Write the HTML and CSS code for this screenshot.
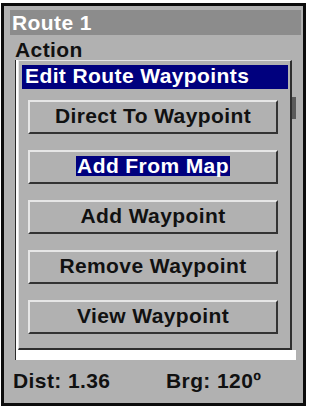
FILE: index.html
```html
<!DOCTYPE html>
<html>
<head>
<meta charset="utf-8">
<link rel="stylesheet" href="styles.css">
</head>
<body>
<div class="screen">
  <div class="titlebar">Route 1</div>
  <div class="label">Action</div>
  <div class="listbox">
    <div class="dialog">
      <div class="dlg-title">Edit Route Waypoints</div>
      <div class="buttons">
        <div class="btn">Direct To Waypoint</div>
        <div class="btn"><span class="sel">Add From Map</span></div>
        <div class="btn">Add Waypoint</div>
        <div class="btn">Remove Waypoint</div>
        <div class="btn">View Waypoint</div>
      </div>
    </div>
    <div class="scroll"><div class="thumb"></div></div>
  </div>
  <div class="footer">
    <span class="dist">Dist: 1.36</span>
    <span class="brg">Brg: 120º</span>
  </div>
</div>
</body>
</html>
```
FILE: styles.css
```css
html, body {
  margin: 0;
  padding: 0;
  background: #ffffff;
}
body {
  font-family: "Liberation Sans", Arial, sans-serif;
  font-weight: bold;
  font-size: 21px;
  letter-spacing: 0.4px;
  color: #111;
}
.screen {
  margin: 3px 0 0 1px;
  width: 305px;
  height: 403px;
  box-sizing: border-box;
  border: 3px solid #0c0c0c;
  background: #b1b1b1;
  display: flex;
  flex-direction: column;
}
.titlebar {
  margin: 4px 2px 0 6px;
  height: 25px;
  line-height: 25px;
  padding-left: 2px;
  background: #8c8c8c;
  color: #ffffff;
}
.label {
  margin: 5px 0 0 11px;
  height: 20px;
  line-height: 20px;
}
.listbox {
  margin-left: 11px;
  width: 280px;
  border-left: 1px solid #2a2a2a;
  background: #ffffff;
  padding-bottom: 10px;
  display: flex;
}
.dialog {
  margin-left: 2px;
  width: 274px;
  box-sizing: border-box;
  background: #b1b1b1;
  border-top: 1px solid #e4e4e4;
  border-left: 1px solid #e4e4e4;
  border-right: 2px solid #2e2e2e;
  border-bottom: 2px solid #2e2e2e;
  padding: 4px 2px 14px 3px;
}
.scroll {
  flex: 1;
  background: #b1b1b1;
  padding-top: 37px;
}
.thumb {
  height: 22px;
  background: #5a5a5a;
}
.dlg-title {
  height: 24px;
  line-height: 22px;
  padding-left: 3px;
  background: #00007e;
  color: #ffffff;
}
.buttons {
  margin-top: 11px;
  display: flex;
  flex-direction: column;
  gap: 16px;
}
.btn {
  margin-left: 6px;
  width: 250px;
  height: 34px;
  box-sizing: border-box;
  border-style: solid;
  border-width: 2px;
  border-color: #e6e6e6 #333333 #333333 #e6e6e6;
  text-align: center;
  line-height: 28px;
  padding-bottom: 2px;
}
.sel {
  display: inline-block;
  line-height: 20px;
  padding: 0 1px;
  background: #00007e;
  color: #ffffff;
}
.footer {
  margin: 9px 0 0 9px;
  line-height: 24px;
  display: flex;
}
.dist {
  width: 153px;
}
```
